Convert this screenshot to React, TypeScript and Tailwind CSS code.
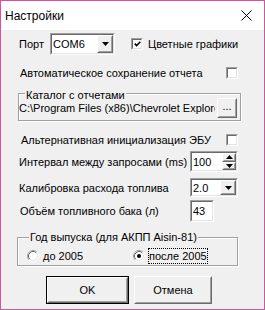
import { ReactNode } from 'react';
import clsx from 'clsx';

const Sunken = ({ className, children }: { className?: string; children?: ReactNode }) => (
	<div className={clsx('border border-t-[#a0a0a0] border-l-[#a0a0a0] border-b-white border-r-white', className)}>
		<div className="h-full flex items-center border border-t-[#696969] border-l-[#696969] border-b-[#e3e3e3] border-r-[#e3e3e3] bg-white">
			{children}
		</div>
	</div>
);

const Raised = ({ className, children }: { className?: string; children?: ReactNode }) => (
	<div className={clsx('border border-t-white border-l-white border-b-[#696969] border-r-[#696969] bg-[#f0f0f0]', className)}>
		<div className="h-full flex items-center justify-center border border-t-[#f0f0f0] border-l-[#f0f0f0] border-b-[#a0a0a0] border-r-[#a0a0a0]">
			{children}
		</div>
	</div>
);

const Arrow = ({ up }: { up?: boolean }) => (
	<svg width="7" height="4" viewBox="0 0 7 4">
		<path d={up ? 'M0 4 L3.5 0 L7 4 Z' : 'M0 0 L7 0 L3.5 4 Z'} fill="#000" />
	</svg>
);

const Combo = ({ value, className }: { value: string; className?: string }) => (
	<Sunken className={className}>
		<span className="flex-1 pl-[1px]">{value}</span>
		<Raised className="w-[16px] h-full">
			<Arrow />
		</Raised>
	</Sunken>
);

const Checkbox = ({ checked, className }: { checked?: boolean; className?: string }) => (
	<Sunken className={clsx('w-[12px] h-[12px] shrink-0', className)}>
		{checked && (
			<svg width="8" height="8" viewBox="0 0 8 8" className="ml-[1px]">
				<path d="M0.8 3.6 L3 5.8 L7.2 1.4" stroke="#000" strokeWidth="1.8" fill="none" />
			</svg>
		)}
	</Sunken>
);

const Radio = ({ checked }: { checked?: boolean }) => (
	<svg width="12" height="12" viewBox="0 0 12 12" className="shrink-0">
		<circle cx="6" cy="6" r="5" fill="#fff" />
		<path d="M2.11 9.89 A5.5 5.5 0 0 1 9.89 2.11" stroke="#a0a0a0" fill="none" />
		<path d="M9.89 2.11 A5.5 5.5 0 0 1 2.11 9.89" stroke="#fff" fill="none" />
		<path d="M2.82 9.18 A4.5 4.5 0 0 1 9.18 2.82" stroke="#696969" fill="none" />
		<path d="M9.18 2.82 A4.5 4.5 0 0 1 2.82 9.18" stroke="#e3e3e3" fill="none" />
		{checked && <circle cx="6" cy="6" r="2" fill="#000" />}
	</svg>
);

export default function App() {
	return (
		<div className="w-[265px] h-[310px] border border-[#c55a9f] bg-[#f0f0f0] flex flex-col text-black overflow-hidden">
			<div className="h-[29px] shrink-0 bg-white flex items-center justify-between pl-[4px] pr-[12px] font-['Liberation_Sans',sans-serif] text-[12px]">
				<span>Настройки</span>
				<svg width="11" height="11" viewBox="0 0 11 11">
					<path d="M0.5 0.5 L10.5 10.5 M10.5 0.5 L0.5 10.5" stroke="#000" strokeWidth="1" />
				</svg>
			</div>

			<div className="ml-[16px] w-[224px] flex flex-col whitespace-nowrap font-['Liberation_Sans',sans-serif] text-[11px] leading-[14px]">
				<div className="mt-[3px] h-[22px] flex items-center">
					<span className="w-[33px] pl-[2px]">Порт</span>
					<Combo value="COM6" className="w-[65px] h-[22px]" />
					<Checkbox checked className="ml-[16px]" />
					<span className="ml-[5px]">Цветные графики</span>
				</div>

				<div className="mt-[11px] h-[14px] flex items-center justify-between pl-[3px] pr-[3px]">
					<span>Автоматическое сохранение отчета</span>
					<Checkbox />
				</div>

				<div className="mt-[13px] ml-[1px] w-[223px] h-[28px] relative border border-[#a0a0a0] shadow-[inset_1px_1px_0_#fff,1px_1px_0_#fff]">
					<span className="absolute left-[6px] -top-[6px] px-[1px] bg-[#f0f0f0]">Каталог с отчетами</span>
					<div className="h-full flex items-center pt-[1px]">
						<div className="w-[196px] overflow-hidden">
							{'C:\\Program Files (x86)\\Chevrolet Explorer\\Reports'}
						</div>
						<Raised className="ml-[2px] w-[20px] h-[20px] leading-none">
							<span className="pb-[3px]">...</span>
						</Raised>
					</div>
				</div>

				<div className="mt-[12px] h-[14px] flex items-center justify-between pl-[4px] pr-[3px]">
					<span>Альтернативная инициализация ЭБУ</span>
					<Checkbox />
				</div>

				<div className="mt-[4px] h-[21px] flex items-center">
					<span className="w-[173px] pl-[2px]">Интервал между запросами (ms)</span>
					<Sunken className="w-[48px] h-[21px]">
						<span className="flex-1 pl-[1px]">100</span>
						<div className="w-[14px] h-full flex flex-col">
							<Raised className="flex-1">
								<Arrow up />
							</Raised>
							<Raised className="flex-1">
								<Arrow />
							</Raised>
						</div>
					</Sunken>
				</div>

				<div className="mt-[6px] h-[19px] flex items-center">
					<span className="w-[173px] pl-[2px]">Калибровка расхода топлива</span>
					<Combo value="2.0" className="w-[48px] h-[19px]" />
				</div>

				<div className="mt-[3px] h-[22px] flex items-center">
					<span className="w-[173px] pl-[3px]">Объём топливного бака (л)</span>
					<Sunken className="w-[24px] h-[22px]">
						<span className="pl-[1px]">43</span>
					</Sunken>
				</div>

				<div className="mt-[15px] w-[221px] h-[29px] relative border border-[#a0a0a0] shadow-[inset_1px_1px_0_#fff,1px_1px_0_#fff]">
					<span className="absolute left-[11px] -top-[8px] px-[1px] bg-[#f0f0f0]">Год выпуска (для АКПП Aisin-81)</span>
					<div className="h-full flex items-center pt-[8px] pl-[9px]">
						<div className="w-[106px] flex items-center">
							<Radio />
							<span className="ml-[4px]">до 2005</span>
						</div>
						<Radio checked />
						<span className="ml-[3px] border border-dotted border-black">после 2005</span>
					</div>
				</div>

				<div className="mt-[10px] flex">
					<div className="ml-[29px] w-[83px] h-[28px] border border-black">
						<Raised className="h-full">OK</Raised>
					</div>
					<Raised className="ml-[5px] w-[78px] h-[28px]">Отмена</Raised>
				</div>
			</div>
		</div>
	);
}
